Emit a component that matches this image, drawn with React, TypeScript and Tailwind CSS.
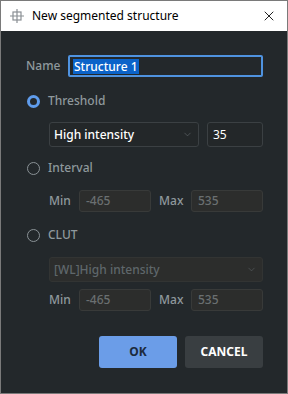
import React from "react";
import { X, ChevronDown } from "lucide-react";

const font = { fontFamily: '"Noto Sans", "Open Sans", sans-serif' };

function Radio({ checked }: { checked?: boolean }) {
  return checked ? (
    <span className="w-[13px] h-[13px] rounded-full border-[3px] border-[#5f9cec] box-border shrink-0" />
  ) : (
    <span className="w-[13px] h-[13px] rounded-full border border-[#8a9296] box-border shrink-0" />
  );
}

function NumBox({ value }: { value: string }) {
  return (
    <div className="h-[22px] flex items-center px-[6px] rounded-[3px] border border-[#383a39] bg-[#2c2d2c] text-[#6a6f70] text-[12px]">
      {value}
    </div>
  );
}

function MinMax() {
  return (
    <div className="flex items-center ml-[23px] text-[12px] font-medium text-[#8f999d]">
      <span className="w-[30px] shrink-0">Min</span>
      <div className="w-[72px] shrink-0">
        <NumBox value="-465" />
      </div>
      <span className="w-[32px] ml-[8px] shrink-0">Max</span>
      <div className="w-[72px] shrink-0">
        <NumBox value="535" />
      </div>
    </div>
  );
}

export default function App() {
  return (
    <div
      className="w-[288px] h-[394px] bg-[#23282b] border border-[#7a7a7a] flex flex-col overflow-hidden"
      style={font}
    >
      <div className="h-[30px] bg-white flex items-center shrink-0">
        <svg width="14" height="14" viewBox="0 0 14 14" className="ml-[9px]">
          <rect x="3" y="3" width="8" height="8" fill="none" stroke="#8a8f94" strokeWidth="1.2" />
          <path d="M7 0v14M0 7h14" stroke="#8a8f94" strokeWidth="1.2" />
        </svg>
        <span className="ml-[8px] text-[12px] text-black">New segmented structure</span>
        <X className="ml-auto mr-[10px] w-[16px] h-[16px] text-black" strokeWidth={1.3} />
      </div>

      <div className="flex flex-col pl-[25px] pr-[24px] pt-[24px]">
        <div className="flex items-center">
          <span className="w-[42px] text-[12px] font-medium text-[#8f999d]">Name</span>
          <div className="flex-1 h-[22px] border-2 border-[#4f93e0] rounded-[2px] flex items-center pl-[3px]">
            <span className="bg-[#0b63c9] text-white text-[12px] font-medium leading-[15px] px-[1px]">
              Structure 1
            </span>
          </div>
        </div>

        <div className="flex items-center gap-[8px] mt-[14px] h-[20px] pl-[1px]">
          <Radio checked />
          <span className="text-[12px] font-medium text-[#8f999d]">Threshold</span>
        </div>

        <div className="flex items-center gap-[8px] mt-[11px] ml-[23px]">
          <div className="w-[150px] h-[25px] flex items-center justify-between pl-[4px] pr-[5px] border border-[#3b4043] rounded-[3px] bg-[#232729] text-[12px] font-medium text-white">
            High intensity
            <ChevronDown className="w-[11px] h-[11px] text-[#6d7478]" strokeWidth={1.2} />
          </div>
          <div className="flex-1 h-[25px] flex items-center px-[5px] border border-[#3b4043] rounded-[3px] bg-[#232729] text-[12px] text-white">
            35
          </div>
        </div>

        <div className="flex items-center gap-[8px] mt-[11px] h-[20px] pl-[1px]">
          <Radio />
          <span className="text-[12px] font-medium text-[#8f999d]">Interval</span>
        </div>

        <div className="mt-[12px]">
          <MinMax />
        </div>

        <div className="flex items-center gap-[8px] mt-[13px] h-[20px] pl-[1px]">
          <Radio />
          <span className="text-[12px] font-medium text-[#8f999d]">CLUT</span>
        </div>

        <div className="mt-[12px] ml-[23px] h-[25px] flex items-center justify-between pl-[4px] pr-[5px] rounded-[3px] bg-[#2c2d2c] border border-[#323433] text-[12px] font-medium text-[#5f676b]">
          [WL]High intensity
          <ChevronDown className="w-[11px] h-[11px] text-[#5f676b]" strokeWidth={1.2} />
        </div>

        <div className="mt-[7px]">
          <MinMax />
        </div>

        <div className="flex justify-end gap-[8px] mt-[25px]">
          <button className="w-[78px] h-[32px] rounded-[3px] bg-[#6b9de8] text-[#1b2a3c] text-[12px] font-bold">
            OK
          </button>
          <button className="w-[78px] h-[32px] rounded-[3px] bg-[#393e41] text-white text-[12px] font-bold">
            CANCEL
          </button>
        </div>
      </div>
    </div>
  );
}
